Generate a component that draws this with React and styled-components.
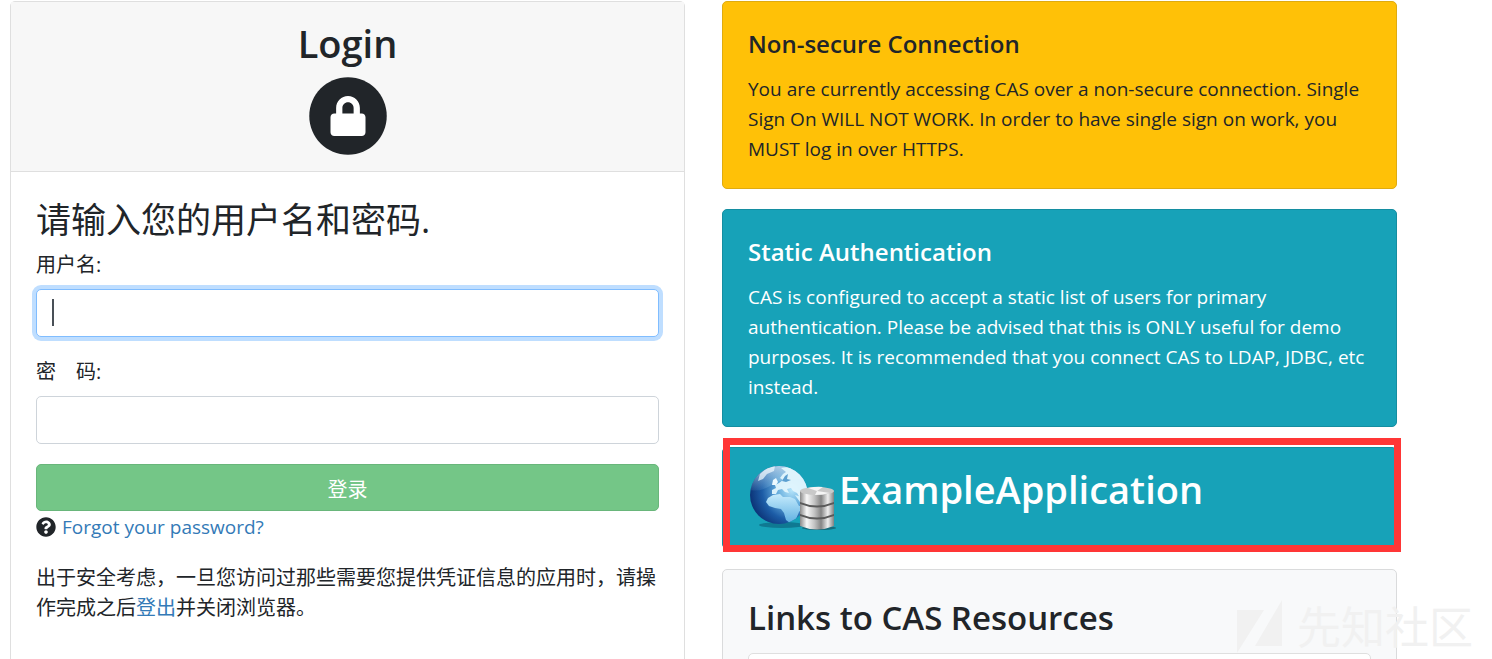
import React from "react";
import styled, { createGlobalStyle, css } from "styled-components";
import { FaCircle, FaLock, FaQuestionCircle } from "react-icons/fa";

const GlobalStyle = createGlobalStyle`
  *, *::before, *::after { box-sizing: border-box; }
  body {
    margin: 0;
    background: #fff;
    color: #212529;
    font-family: "Open Sans", "Noto Sans CJK SC", sans-serif;
    font-size: 19px;
    line-height: 30px;
  }
  h2, h3, h5, p { margin: 0; }
`;

const Page = styled.main`
  position: relative;
  display: grid;
  grid-template-columns: 1fr 1fr;
  gap: 37px;
  height: 100vh;
  padding: 1px 95px 0 10px;
  overflow: hidden;
`;

const LoginCard = styled.section`
  min-height: 720px;
  border: 1px solid #dfdfdf;
  border-radius: 5px;
  background: #fff;
`;

const LoginHeader = styled.header`
  display: flex;
  flex-direction: column;
  align-items: center;
  gap: 8px;
  padding: 16px 25px 15px;
  border-bottom: 1px solid #dfdfdf;
  background: #f7f7f7;
`;

const LoginTitle = styled.h2`
  font-size: 38px;
  line-height: 50px;
  font-weight: 600;
`;

const IconStack = styled.div`
  display: grid;
  place-items: center;
  width: 80px;
  height: 80px;
  & > svg { grid-area: 1 / 1; }
`;

const LoginBody = styled.form`
  display: flex;
  flex-direction: column;
  padding: 25px;
`;

const Prompt = styled.h3`
  margin-bottom: 8px;
  font-size: 35px;
  line-height: 45px;
  font-weight: 400;
`;

const Field = styled.div`
  display: flex;
  flex-direction: column;
  gap: 9px;
  margin-bottom: 20px;
`;

const Label = styled.label`
  font-size: 20px;
  white-space: pre;
`;

const InputFrame = styled.div`
  position: relative;
  display: flex;
`;

const Input = styled.input`
  width: 100%;
  height: 48px;
  padding: 8px 15px;
  border: 1px solid #ced4da;
  border-radius: 5px;
  outline: none;
  background: #fff;
  color: #495057;
  font: inherit;
  ${({ $active }) =>
    $active &&
    css`
      border-color: #80bdff;
      box-shadow: 0 0 0 4px #bfdeff;
    `}
`;

const Caret = styled.span`
  position: absolute;
  top: 10px;
  left: 16px;
  width: 2px;
  height: 27px;
  background: #495057;
`;

const SubmitButton = styled.button`
  height: 47px;
  padding: 4px 15px 0;
  border: 1px solid #69b67b;
  border-radius: 5px;
  background: #74c687;
  color: #fff;
  font: inherit;
  font-size: 20px;
`;

const ForgotRow = styled.div`
  display: flex;
  align-items: center;
  gap: 6px;
  margin-bottom: 20px;
  line-height: 32px;
`;

const Link = styled.a`
  color: #337ab7;
  text-decoration: none;
`;

const Notice = styled.p`
  font-size: 20px;
`;

const Sidebar = styled.div`
  display: flex;
  flex-direction: column;
  gap: 20px;
`;

const tones = {
  warning: css`background: #ffc107; border-color: #dfab10; color: #212529;`,
  info: css`background: #17a2b8; border-color: #148ea1; color: #fff;`,
  light: css`background: #f8f9fa; border-color: #dadbdc; color: #212529;`,
};

const Card = styled.section`
  padding: 25px 25px 24px;
  border: 1px solid;
  border-radius: 5px;
  ${({ $tone }) => tones[$tone]}
`;

const CardTitle = styled.h5`
  margin-bottom: 13px;
  font-size: 24px;
  line-height: 34px;
  font-weight: 600;
`;

const Highlight = styled.div`
  position: relative;
  &::after {
    content: "";
    position: absolute;
    inset: -9px -4px -3px 1px;
    border: 7px solid #ff3636;
  }
`;

const AppCard = styled(Card)`
  display: flex;
  align-items: flex-start;
  gap: 3px;
  height: 102px;
  padding: 16px 27px;
`;

const AppName = styled.h2`
  font-size: 38px;
  line-height: 50px;
  font-weight: 600;
`;

const LinksTitle = styled.h3`
  margin-bottom: 12px;
  font-size: 33px;
  line-height: 46px;
  font-weight: 600;
`;

const LinkList = styled.div`
  height: 80px;
  border: 1px solid #dfdfdf;
  border-radius: 5px;
  background: #fff;
`;

const Watermark = styled.div`
  position: absolute;
  right: 19px;
  bottom: 0;
  display: flex;
  align-items: center;
  gap: 13px;
  color: #f1f1f1;
  font-size: 44px;
  line-height: 64px;
`;

function GlobeDatabase() {
  return (
    <svg width="86" height="68" viewBox="0 0 86 68" aria-hidden="true">
      <defs>
        <radialGradient id="sea" cx="0.72" cy="0.42" r="0.75">
          <stop offset="0" stopColor="#b5e4fa" />
          <stop offset="0.35" stopColor="#62aadb" />
          <stop offset="0.68" stopColor="#1c5ca6" />
          <stop offset="1" stopColor="#0a2f72" />
        </radialGradient>
        <linearGradient id="gloss" x1="0" y1="0" x2="0" y2="1">
          <stop offset="0" stopColor="#e8f6fd" stopOpacity="0.8" />
          <stop offset="1" stopColor="#8fc6e8" stopOpacity="0.1" />
        </linearGradient>
        <linearGradient id="africa" x1="0" y1="0" x2="0" y2="1">
          <stop offset="0" stopColor="#c6ebfc" />
          <stop offset="1" stopColor="#5fb0e2" />
        </linearGradient>
        <linearGradient id="metal" x1="0" y1="0" x2="1" y2="0">
          <stop offset="0" stopColor="#8a8a8a" />
          <stop offset="0.2" stopColor="#f8f8f8" />
          <stop offset="0.42" stopColor="#c4c4c4" />
          <stop offset="0.62" stopColor="#858585" />
          <stop offset="0.82" stopColor="#eeeeee" />
          <stop offset="1" stopColor="#808080" />
        </linearGradient>
        <clipPath id="ball"><circle cx="29" cy="31" r="29" /></clipPath>
      </defs>
      <ellipse cx="32" cy="61" rx="23" ry="3" fill="#08506b" opacity="0.5" />
      <circle cx="29" cy="31" r="29" fill="url(#sea)" />
      <g clipPath="url(#ball)">
        <path d="M0 0H58V16Q34 12 20 22 10 28 0 26Z" fill="url(#gloss)" />
        <path d="M10 10 17 4 25 2 24 7 17 10 13 15 8 17Z" fill="#f2fbff" opacity="0.7" />
        <path d="M31 4 38 3 46 6 55 15 59 28 55 36 50 34 47 29 43 27 41 24 37 25 39 29 35 28 32 25 28 26 26 30 22 30 22 26 26 24 25 21 29 19 33 16 30 14 33 10 36 8Z" fill="#e2f5fd" opacity="0.95" />
        <path d="M23 16 26 14 28 18 26 21 22 21Z" fill="#eefaff" />
        <path d="M35 12 38 10 37 15 41 16 36 18 32 17Z" fill="#5b9fd0" />
        <path d="M18 34 23 31 30 30 33 33 40 33 45 35 49 42 54 42 49 48 46 55 40 59 36 56 34 49 31 45 25 44 19 42 16 38Z" fill="url(#africa)" />
        <path d="m45 31 5 7 5 2-3-7Z" fill="#d6f1fc" />
      </g>
      <ellipse cx="69" cy="64" rx="17" ry="2" fill="#164753" opacity="0.6" />
      <path d="M50 51v11q17 7 34 0V51Z" fill="url(#metal)" />
      <path d="M50 49v3q17 7 34 0v-3Z" fill="#5a5a5a" />
      <path d="M50 39v11q17 7 34 0V39Z" fill="url(#metal)" />
      <path d="M50 37v3q17 7 34 0v-3Z" fill="#5a5a5a" />
      <path d="M50 27v11q17 7 34 0V27Z" fill="url(#metal)" />
      <ellipse cx="67" cy="27" rx="17" ry="4" fill="#c9c9c9" />
      <path d="m67 27-9-3q9-2 15-1Zm0 0 13 2q-8 2-15 2Z" fill="#f5f5f5" />
    </svg>
  );
}

export default function App() {
  return (
    <>
      <GlobalStyle />
      <Page>
        <LoginCard>
          <LoginHeader>
            <LoginTitle>Login</LoginTitle>
            <IconStack aria-hidden="true">
              <FaCircle size={80} />
              <FaLock size={40} color="#fff" />
            </IconStack>
          </LoginHeader>
          <LoginBody onSubmit={(e) => e.preventDefault()}>
            <Prompt>请输入您的用户名和密码.</Prompt>
            <Field>
              <Label htmlFor="username">用户名:</Label>
              <InputFrame>
                <Input id="username" type="text" $active />
                <Caret />
              </InputFrame>
            </Field>
            <Field>
              <Label htmlFor="password">密　码:</Label>
              <InputFrame>
                <Input id="password" type="password" />
              </InputFrame>
            </Field>
            <SubmitButton type="submit">登录</SubmitButton>
            <ForgotRow>
              <FaQuestionCircle size={20} aria-hidden="true" />
              <Link href="#forgot">Forgot your password?</Link>
            </ForgotRow>
            <Notice>
              出于安全考虑，一旦您访问过那些需要您提供凭证信息的应用时，请操作完成之后
              <Link href="#logout">登出</Link>并关闭浏览器。
            </Notice>
          </LoginBody>
        </LoginCard>

        <Sidebar>
          <Card $tone="warning">
            <CardTitle>Non-secure Connection</CardTitle>
            <p>
              You are currently accessing CAS over a non-secure connection. Single Sign On WILL NOT
              WORK. In order to have single sign on work, you MUST log in over HTTPS.
            </p>
          </Card>
          <Card $tone="info">
            <CardTitle>Static Authentication</CardTitle>
            <p>
              CAS is configured to accept a static list of users for primary authentication. Please
              be advised that this is ONLY useful for demo purposes. It is recommended that you
              connect CAS to LDAP, JDBC, etc instead.
            </p>
          </Card>
          <Highlight>
            <AppCard $tone="info">
              <GlobeDatabase />
              <AppName>ExampleApplication</AppName>
            </AppCard>
          </Highlight>
          <Card $tone="light">
            <LinksTitle>Links to CAS Resources</LinksTitle>
            <LinkList />
          </Card>
        </Sidebar>

        <Watermark>
          <svg width="48" height="54" viewBox="0 0 48 54" fill="#f1f1f1" aria-hidden="true">
            <path d="M1 10H28L1 53ZM46 0V46H19Z" />
          </svg>
          <span>先知社区</span>
        </Watermark>
      </Page>
    </>
  );
}
